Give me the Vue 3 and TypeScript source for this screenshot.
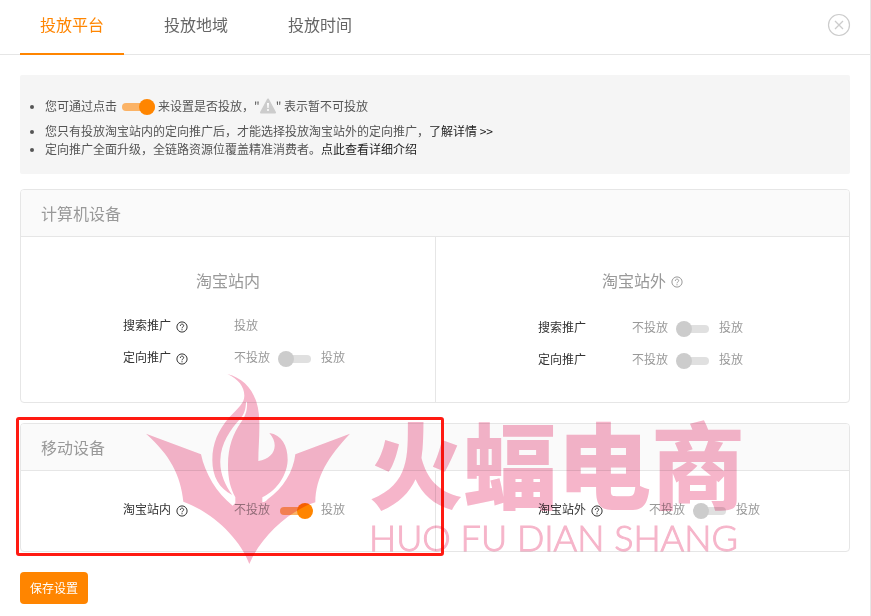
<script setup lang="ts">
import { ref } from 'vue'

interface Row {
  id: string
  label: string
  help: boolean
  fixed?: boolean
  on: boolean
}
interface Site {
  title?: string
  help?: boolean
  rows: Row[]
}
interface Device {
  name: string
  marked: boolean
  sites: Site[]
}

const tabs = ['投放平台', '投放地域', '投放时间']
const active = ref(0)

const devices = ref<Device[]>([
  {
    name: '计算机设备',
    marked: false,
    sites: [
      {
        title: '淘宝站内',
        rows: [
          { id: 'pc-in-search', label: '搜索推广', help: true, fixed: true, on: true },
          { id: 'pc-in-target', label: '定向推广', help: true, on: false },
        ],
      },
      {
        title: '淘宝站外',
        help: true,
        rows: [
          { id: 'pc-out-search', label: '搜索推广', help: false, on: false },
          { id: 'pc-out-target', label: '定向推广', help: false, on: false },
        ],
      },
    ],
  },
  {
    name: '移动设备',
    marked: true,
    sites: [
      { rows: [{ id: 'mobile-in', label: '淘宝站内', help: true, on: true }] },
      { rows: [{ id: 'mobile-out', label: '淘宝站外', help: true, on: false }] },
    ],
  },
])
</script>

<template>
  <div class="dialog">
    <header class="head">
      <nav class="tabs">
        <button
          v-for="(tab, i) in tabs"
          :key="tab"
          type="button"
          class="tab"
          :class="{ active: i === active }"
          @click="active = i"
        >{{ tab }}</button>
      </nav>
      <button type="button" class="close" aria-label="关闭">
        <svg width="24" height="24" viewBox="0 0 24 24" fill="none" stroke="#ccc">
          <circle cx="12" cy="12" r="10.5" stroke-width="1.2" />
          <path d="M8 8l8 8M16 8l-8 8" stroke-width="1.3" />
        </svg>
      </button>
    </header>

    <main class="content">
      <ul class="notice">
        <li class="tall">
          <span>您可通过点击</span>
          <span class="sample"></span>
          <span>来设置是否投放，"</span>
          <svg class="warn" width="16" height="16" viewBox="0 0 16 16">
            <path d="M8 1.500L15 14.500H1z" fill="#ccc" stroke="#ccc" stroke-width="2" stroke-linejoin="round" />
            <path d="M7 5h2l-.4 5h-1.200z" fill="#fff" />
            <circle cx="8" cy="12" r="1" fill="#fff" />
          </svg>
          <span>" 表示暂不可投放</span>
        </li>
        <li>您只有投放淘宝站内的定向推广后，才能选择投放淘宝站外的定向推广，<a href="#detail">了解详情 &gt;&gt;</a></li>
        <li>定向推广全面升级，全链路资源位覆盖精准消费者。<a href="#intro">点此查看详细介绍</a></li>
      </ul>

      <div v-for="device in devices" :key="device.name" class="device">
        <section class="panel">
          <h2 class="panel-head">{{ device.name }}</h2>
          <div class="sites">
            <div v-for="(site, s) in device.sites" :key="s" class="site" :class="{ titled: site.title }">
              <h3 v-if="site.title" class="site-title" :class="{ 'with-help': site.help }">
                {{ site.title }}
                <svg v-if="site.help" class="help" width="12" height="12" viewBox="0 0 12 12" fill="none" stroke="currentColor">
                  <circle cx="6" cy="6" r="5.100" />
                  <path d="M4.300 4.900C4.300 2.600 7.700 2.600 7.700 4.700C7.700 5.900 6 5.900 6 7.300M6 8.200V9.300" />
                </svg>
              </h3>
              <div v-for="row in site.rows" :key="row.id" class="row">
                <label class="name" :for="row.fixed ? undefined : row.id">
                  {{ row.label }}
                  <svg v-if="row.help" class="help" width="12" height="12" viewBox="0 0 12 12" fill="none" stroke="currentColor">
                    <circle cx="6" cy="6" r="5.100" />
                    <path d="M4.300 4.900C4.300 2.600 7.700 2.600 7.700 4.700C7.700 5.900 6 5.900 6 7.300M6 8.200V9.300" />
                  </svg>
                </label>
                <span v-if="row.fixed" class="value">投放</span>
                <span v-else class="value">
                  <span>不投放</span>
                  <input :id="row.id" v-model="row.on" type="checkbox" role="switch" class="switch" />
                  <span>投放</span>
                </span>
              </div>
            </div>
          </div>
        </section>

        <template v-if="device.marked">
          <div class="frame"></div>
          <div class="brand">
            <svg width="220" height="205" viewBox="0 0 660 615" fill="#f6b5ca">
              <path
                d="M262 27C320 42 357 90 358 170C359 215 355 250 355 288C402 282 420 240 388 204C425 210 443 240 443 285C441 340 400 382 367 397V412C374 412 378 408 383 403C430 370 460 320 466 268L630 206C565 275 527 335 526 412C440 440 360 520 328 597C300 520 215 440 130 410C122 330 90 270 18 206L183 268C195 325 230 385 278 422L286 414V397C272 370 264 345 264 300C264 245 280 205 303 172C318 150 322 135 321 110L318 112C317 135 312 148 302 160C270 195 243 235 241 285C239 325 255 360 277 390C237 370 217 335 217 285C217 235 235 195 268 157C295 127 313 115 313 92C313 65 295 42 262 27Z"
              />
            </svg>
            <div class="brand-text">
              <span class="brand-cn">火蝠电商</span>
              <span class="brand-en">HUO FU DIAN SHANG</span>
            </div>
          </div>
        </template>
      </div>

      <button type="button" class="save">保存设置</button>
    </main>
  </div>
</template>

<style>
body {
  margin: 0;
  background: #fff;
}
</style>

<style scoped>
.dialog {
  box-sizing: border-box;
  min-height: 100vh;
  border-right: 1px solid #e6e6e6;
  color: #333;
  font: 12px/18px "Noto Sans CJK SC", sans-serif;
}
button {
  padding: 0;
  border: 0;
  background: none;
  font: inherit;
  cursor: pointer;
}
.head {
  display: flex;
  justify-content: space-between;
  align-items: flex-start;
  padding: 0 19px 0 20px;
  border-bottom: 1px solid #e6e6e6;
}
.tabs {
  display: flex;
  gap: 20px;
  margin-bottom: -1px;
}
.tab {
  box-sizing: border-box;
  height: 55px;
  padding: 0 20px 4px;
  border-bottom: 2px solid transparent;
  color: #666;
  font-size: 16px;
  line-height: 49px;
}
.tab.active {
  border-color: #ff8500;
  color: #ff8500;
}
.close {
  display: flex;
  margin-top: 13px;
}
.content {
  padding: 20px 20px 12px;
}
.notice {
  margin: 0 0 15px;
  padding: 15px 24px 16px 25px;
  border-radius: 2px;
  background: #f5f5f5;
  color: #555;
  list-style: none;
}
.notice li {
  position: relative;
}
.notice li::before {
  content: "";
  position: absolute;
  top: 50%;
  left: -15px;
  width: 4px;
  height: 4px;
  margin-top: -1px;
  border-radius: 50%;
  background: #555;
}
.notice .tall {
  display: flex;
  align-items: center;
  height: 32px;
}
.notice a {
  color: #222;
  text-decoration: none;
}
.sample {
  position: relative;
  width: 33px;
  height: 8px;
  margin: 2px 3px 0 5px;
  border-radius: 4px;
  background: #fbb366;
}
.sample::after {
  content: "";
  position: absolute;
  top: -4px;
  right: 0;
  width: 16px;
  height: 16px;
  border-radius: 50%;
  background: #ff8500;
}
.device {
  position: relative;
  margin-bottom: 20px;
}
.panel {
  overflow: hidden;
  border: 1px solid #e6e6e6;
  border-radius: 4px;
}
.panel-head {
  margin: 0;
  padding: 0 20px;
  border-bottom: 1px solid #e6e6e6;
  background: #fafafa;
  color: #999;
  font-size: 16px;
  font-weight: 400;
  line-height: 46px;
}
.sites {
  display: grid;
  grid-template-columns: 1fr 1fr;
}
.site {
  padding: 22px 0 26px;
}
.site + .site {
  border-left: 1px solid #e6e6e6;
}
.site.titled {
  padding: 31px 0 27px;
}
.site-title {
  display: flex;
  align-items: center;
  justify-content: center;
  gap: 5px;
  margin: 0 0 17px;
  color: #999;
  font-size: 16px;
  font-weight: 400;
  line-height: 24px;
}
.site-title.with-help {
  margin-bottom: 19px;
}
.help {
  flex: none;
  margin-top: 3px;
}
.row {
  display: flex;
  align-items: center;
  gap: 46px;
  height: 32px;
  padding-left: 102px;
}
.name {
  display: flex;
  align-items: center;
  gap: 5px;
}
.value {
  display: flex;
  align-items: center;
  gap: 10px;
  color: #999;
}
.switch {
  appearance: none;
  position: relative;
  width: 31px;
  height: 8px;
  margin: 3px 0 0;
  border-radius: 4px;
  background: #e0e0e0;
  cursor: pointer;
}
.switch::after {
  content: "";
  position: absolute;
  top: -4px;
  left: -2px;
  width: 16px;
  height: 16px;
  border-radius: 50%;
  background: #ccc;
}
.switch:checked {
  background: #fbb366;
}
.switch:checked::after {
  left: 17px;
  background: #ff8500;
}
.frame {
  position: absolute;
  top: -6px;
  bottom: -4px;
  left: -4px;
  box-sizing: border-box;
  width: calc(50% + 13px);
  border: 3px solid #ff1a12;
  border-radius: 3px;
  pointer-events: none;
}
.brand {
  position: absolute;
  top: -58px;
  left: 120px;
  display: flex;
  gap: 9px;
  color: #f6b5ca;
  mix-blend-mode: multiply;
  white-space: nowrap;
  pointer-events: none;
}
.brand-text {
  display: flex;
  flex-direction: column;
  padding-top: 48px;
}
.brand-cn {
  font-size: 94px;
  font-weight: 900;
  line-height: 96px;
}
.brand-en {
  margin-top: 4px;
  font-family: Lato, sans-serif;
  font-size: 36px;
  font-weight: 300;
  line-height: 48px;
  -webkit-text-stroke: 1px #f6b5ca;
}
.save {
  height: 32px;
  padding: 0 10px;
  border-radius: 4px;
  background: #ff8500;
  color: #fff;
}
</style>
